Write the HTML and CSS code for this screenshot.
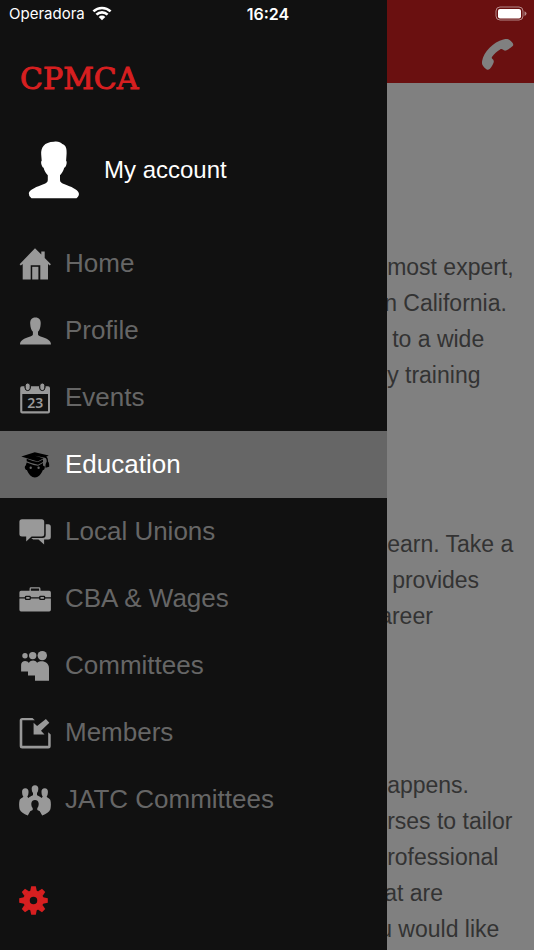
FILE: index.html
```html
<!DOCTYPE html>
<html lang="en">
<head>
<meta charset="utf-8">
<meta name="viewport" content="width=device-width, initial-scale=1">
<title>CPMCA</title>
<link rel="stylesheet" href="styles.css">
</head>
<body>
<div class="app">
  <div class="status">
    <div class="carrier">
      <span>Operadora</span>
      <svg class="wifi" viewBox="0 0 20 15" aria-hidden="true"><path d="M1.4 5.4a12.4 12.4 0 0 1 17.2 0M4.4 8.6a8.1 8.1 0 0 1 11.2 0" fill="none" stroke="currentColor" stroke-width="2.6"/><path d="M10 14.2l-3.3-3.3a4.7 4.7 0 0 1 6.6 0z"/></svg>
    </div>
    <time class="clock">16:24</time>
    <svg class="battery" viewBox="0 0 32 16" aria-hidden="true"><rect x="1" y="1" width="27" height="13" rx="4" fill="none" stroke="currentColor" stroke-opacity=".5"/><rect x="3" y="3" width="23" height="9.5" rx="2"/><path d="M29.5 5.2q2 .8 2 2.4t-2 2.4z" opacity=".5"/></svg>
  </div>

  <aside class="drawer">
    <h1 class="brand">CPMCA</h1>
    <a class="account" href="#account">
      <svg class="avatar" viewBox="0 0 52 58" aria-hidden="true"><path d="M26 .7c4-.5 6.6.4 8.300 2.300 3.400.9 4.600 4.500 4.300 9.500l-.5 7.200c.9.700.8 3-.2 5.200-.5 1.100-1.100 1.700-1.700 1.900-.7 3.200-2.500 5.700-4.200 7.500v4.600c0 2.100 1.700 3.300 4.600 4.400 6.700 2.500 12.600 5 14.200 8.600q.7 3-2.300 5.300H3.500Q.5 54.900.8 51.900c1.600-3.600 7.900-6.100 14.600-8.600 2.900-1.100 4.400-2.300 4.400-4.400v-4.600c-1.700-1.800-3.500-4.300-4.200-7.500-.8-.2-1.400-1-1.800-2.200-.9-2.500-.9-4.500-.1-4.900l-.5-6.200C12.800 6.500 16 1 26 .7z"/></svg>
      <span>My account</span>
    </a>
    <nav class="menu">
      <a class="item" href="#home">
        <svg class="icon" viewBox="0 0 32 32" aria-hidden="true"><path d="M16 .3l6.300 6.200v-3h3.400v6.400l6.200 6.300-1.100 1.200-1.800-1.500v15.600h-7.700V17.300h-9.600v14.200h-8V15.900l-1.900 1.500L.6 16.200z"/><path d="M13.200 18.800h6.200v12.700h-6.200z"/></svg>
        <span>Home</span>
      </a>
      <a class="item" href="#profile">
        <svg class="icon" viewBox="0 0 32 32" aria-hidden="true"><path d="M16.400 2.500c3.800 0 5.500 2.500 5.300 6.200-.2 4-1.200 6.400-2.700 8v2.500c0 1.200 1 1.700 2.600 2.300 6.400 2.200 10.400 3.700 10.400 8H1c0-4.300 4-5.800 10.300-8 1.700-.6 2.600-1.100 2.600-2.300v-2.500c-1.500-1.600-2.500-4-2.700-8-.2-3.700 1.400-6.200 5.200-6.200z"/></svg>
        <span>Profile</span>
      </a>
      <a class="item" href="#events">
        <svg class="icon" viewBox="0 0 32 32" aria-hidden="true"><path fill-rule="evenodd" d="M3 4.200h2.600v1.600a3.200 3.200 0 0 0 6.200 0V4.200h8.400v1.600a3.200 3.200 0 0 0 6.200 0V4.200H29q2 0 2 2v23.200q0 2-2 2H3.200q-2 0-2-2V6.200q0-2 1.800-2zM3.300 12v17.300H29V12z"/><rect class="ring" x="6.200" y="1" width="5" height="7.600" rx="2.500"/><rect class="ring" x="20.800" y="1" width="5" height="7.600" rx="2.500"/><text class="date" x="16.200" y="25.500" text-anchor="middle">23</text></svg>
        <span>Events</span>
      </a>
      <a class="item active" href="#education" aria-current="page">
        <svg class="icon" viewBox="0 0 32 32" aria-hidden="true"><path d="M15.800 3.300l14 3.200-2.600 1.300c1.500.8 1.800 2 1.800 4.800.9.800 1.400 2.600 1.200 5.200l-3.700 1c-.2-2 .1-4.600 1.200-6 0-2.300-.3-3.400-1.800-4L16 6.800l8.500 2.500-5.700 3.200q-8.500-2.400-16.500-5z"/><path d="M7.700 9.800q5.500 2.400 11.300 3.300l5-2.700v2.500l-5 2.800q-6-.9-11.300-3.400zM7.700 13.600q5.500 2.500 11.300 3.200l5-2.700v2.600c1.600-.2 2.300 1 1.500 3-.4 1-1 1.400-1.600 1.400-1.700 4.500-4.800 7.500-8 7.500s-6.300-3-8-7.500c-1.900-.4-3-3.600-1.200-4.700z"/><path class="eye" d="M10.500 18.700a1.200 1.200 0 1 0 2.400 0 1.200 1.200 0 1 0-2.400 0zM18.400 18.700a1.200 1.200 0 1 0 2.400 0 1.200 1.200 0 1 0-2.400 0z"/></svg>
        <span>Education</span>
      </a>
      <a class="item" href="#unions">
        <svg class="icon" viewBox="0 0 32 32" aria-hidden="true"><path d="M3 3.200h19.700q2.500 0 2.500 2.500V18q0 2.500-2.500 2.500H12.600L7.200 25.600v-5.100H3Q.4 20.500.4 18V5.700Q.4 3.200 3 3.200z"/><path d="M26.700 8.200h2.600q2.500 0 2.500 2.500V21q0 2.500-2.500 2.500h-4.200v5L19.500 23.600h-5.400l-1.900-1.700h11.300q3.200 0 3.200-3.200z"/></svg>
        <span>Local Unions</span>
      </a>
      <a class="item" href="#wages">
        <svg class="icon" viewBox="0 0 32 32" aria-hidden="true"><path d="M11.200 8V5.700q0-.8.800-.8h8q.8 0 .8.800V8" fill="none" stroke="currentColor" stroke-width="1.300"/><path d="M2 7.800h28.200q1.700 0 1.700 1.700v4.700h-5.600q0-1.400-1.400-1.400h-3.400q-1.400 0-1.400 1.400h-8.200q0-1.400-1.400-1.400H7.200q-1.400 0-1.400 1.400H.4V9.500q0-1.700 1.600-1.700zM.4 15.400h5.400q0 1.600 1.400 1.600h3.300q1.400 0 1.400-1.600h8.200q0 1.600 1.400 1.600h3.400q1.400 0 1.400-1.600h5.600v11.400q0 1.800-1.700 1.800H2q-1.600 0-1.600-1.800z"/><path d="M7.200 14h3.400v1.700H7.200zM21.500 14h3.400v1.700h-3.400z"/></svg>
        <span>CBA &amp; Wages</span>
      </a>
      <a class="item" href="#committees">
        <svg class="icon" viewBox="0 0 32 32" aria-hidden="true"><circle cx="6" cy="5.800" r="2.700"/><circle cx="13.700" cy="5.600" r="3.700"/><circle cx="23.300" cy="5.600" r="4.700"/><path d="M2.100 21.500v-6.400c0-5 6-5.200 7.700-2.200 2-3.200 6.500-3.200 8.300-.2 4.200-3.200 11.900-1.100 11.900 5.500v12.600H16v-5.300H9v-4z"/></svg>
        <span>Committees</span>
      </a>
      <a class="item" href="#members">
        <svg class="icon" viewBox="0 0 32 32" aria-hidden="true"><path d="M15.800 3.300L13.500 1H3.200Q.7 1 .7 3.500v25.600q0 2.500 2.500 2.500h26q2.500 0 2.500-2.500V17.600l-2.500-2.300v13.500H3.300V3.300z"/><path d="M14.600 5.800l3.500 3.300 8.800-7.100 3.400 3.700-8.300 8 3.500 3.800H14.600z"/></svg>
        <span>Members</span>
      </a>
      <a class="item" href="#jatc">
        <svg class="icon" viewBox="0 0 32 32" aria-hidden="true"><path d="M16 1.200c2.400 0 3.500 1.500 3.300 3.900-.1 2-.6 3.200-1.300 4v1.600c0 1 3 1.500 4.300 3.200q1.200-.4 1.400-1.300c-.7-.8-1.100-2.200-1.200-4.300-.2-2.600.9-4.100 3.200-4.100s3.400 1.500 3.200 4.100c-.1 2.100-.5 3.500-1.200 4.300.1 1.300 3.100 1.600 3.700 3.600.7 2.400.6 6.500 0 9-1.200 2.700-4 4.900-8.200 6.200l-2.400-4.200-2.500-1.100v-2c1.200-1.500 1.600-3.500 1.300-5.200-.3-2-1.600-3-3.600-3s-3.300 1-3.600 3c-.3 1.700.1 3.700 1.300 5.200v2l-2.500 1.100-2.400 4.200C4.600 30.100 1.800 27.900.6 25.200c-.6-2.500-.7-6.600 0-9 .6-2 3.600-2.300 3.700-3.600-.7-.8-1.100-2.200-1.200-4.300-.2-2.600.9-4.100 3.200-4.100s3.400 1.500 3.200 4.100c-.1 2.100-.5 3.500-1.200 4.300q.2.900 1.400 1.300c1.300-1.700 4.300-2.200 4.300-3.200V9.100c-.7-.8-1.200-2-1.300-4-.2-2.400.9-3.900 3.300-3.900z"/></svg>
        <span>JATC Committees</span>
      </a>
    </nav>
    <button class="settings" type="button" aria-label="Settings">
      <svg viewBox="-14.500 -14.500 29 29" aria-hidden="true"><circle r="7" fill="none" stroke="currentColor" stroke-width="6.500"/><g id="teeth"><path id="tooth" d="M-3.300-9.500l1-4.800h4.600l1 4.800z"/><use href="#tooth" transform="rotate(45)"/><use href="#tooth" transform="rotate(90)"/><use href="#tooth" transform="rotate(135)"/></g><use href="#teeth" transform="rotate(180)"/></svg>
    </button>
  </aside>

  <main class="page">
    <header class="topbar">
      <a class="call" href="#call" aria-label="Call"><svg viewBox="0 0 32 32" aria-hidden="true"><path d="M21.300.4C23.500-.2 25.500-.3 26.800.5 28.300 1.400 30 3 30.800 4.300c.6 1 .6 1.900-.1 2.700-1.700 1.800-4.200 3.300-6.700 4.500-1.300.4-2.200-.1-3.200-.9-.8-.7-1.700-.7-2.700-.2-3 1.700-6.100 4.500-8 7.300-.6 1-.4 1.700.4 2.400 1 .8 1.500 1.800 1.200 3.200-.7 2.500-2.200 4.900-4 6.700-.9.800-2 1-3 .4C2.900 29.300 1.400 27.800.5 26-.1 24.900-.1 23.500.1 22 1.700 12.500 11.500 2.900 21.300.4z"/></svg></a>
    </header>
    <article class="copy">
      <p><span>most expert,</span><span class="out">n California.</span><span class="in">to a wide</span><span>y training</span></p>
      <p><span>earn. Take a</span><span class="in">provides</span><span class="far">areer</span></p>
      <p><span>appens.</span><span>rses to tailor</span><span>rofessional</span><span class="out">at are</span><span class="far">u would like</span></p>
    </article>
  </main>
</div>
</body>
</html>
```

FILE: styles.css
```css
* { box-sizing: border-box; }

body {
  margin: 0;
  background: #808080;
  font-family: "Liberation Sans", Arial, sans-serif;
}

svg { display: block; fill: currentColor; }

a { color: inherit; text-decoration: none; }

.app {
  position: relative;
  display: grid;
  grid-template-columns: 72.5% 1fr;
  min-height: 100vh;
}

/* Status bar floats over the drawer and the page header */
.status {
  position: absolute;
  top: 0;
  left: 0;
  right: 0;
  display: grid;
  grid-template-columns: 1fr auto 1fr;
  align-items: center;
  height: 27px;
  padding: 0 7px 0 9px;
  color: #fff;
  font: 15px Inter, sans-serif;
}

.carrier { display: flex; align-items: center; gap: 7px; }
.wifi { width: 20px; height: 15px; }
.clock { font-size: 16px; font-weight: 600; }
.battery { width: 32px; height: 16px; justify-self: end; }

.drawer {
  background: #111;
  color: #666;
  padding-top: 61px;
}

.brand {
  margin: 0;
  padding-left: 20px;
  color: #d71f20;
  font: 30px/36px "DejaVu Serif", serif;
  -webkit-text-stroke: 1px #d71f20;
}

.account {
  display: flex;
  align-items: center;
  gap: 24px;
  height: 60px;
  margin: 43px 0 30px;
  padding-left: 28px;
  color: #fff;
  font-size: 24px;
}

.avatar { width: 52px; height: 58px; }

.item {
  display: flex;
  align-items: center;
  gap: 14px;
  height: 67px;
  padding-left: 19px;
  font-size: 26px;
}

.icon { width: 32px; height: 32px; color: #999; }
.ring { stroke: #111; }
.date { font: 600 14px "Noto Sans", sans-serif; }

.active { background: #666; color: #fff; }
.active .icon { color: #000; }
.eye { fill: #666; }

.settings {
  display: block;
  margin: 53px 0 32px 19px;
  padding: 0;
  border: 0;
  background: none;
  color: #d71f20;
}

.settings svg { width: 29px; height: 29px; }

.page { overflow: hidden; min-width: 0; }

.topbar {
  display: flex;
  justify-content: flex-end;
  align-items: flex-end;
  height: 83px;
  padding: 0 20px 12px;
  background: #6a1010;
  color: #808080;
}

.call svg { width: 32px; height: 32px; }

.copy {
  display: grid;
  gap: 133px;
  padding-top: 166px;
  color: #333;
  font-size: 23px;
  line-height: 36px;
  white-space: nowrap;
}

.copy p { margin: 0; }
.copy span { display: block; }
.copy .in { text-indent: 5px; }
.copy .out { text-indent: -3px; }
.copy .far { text-indent: -8px; }
```
